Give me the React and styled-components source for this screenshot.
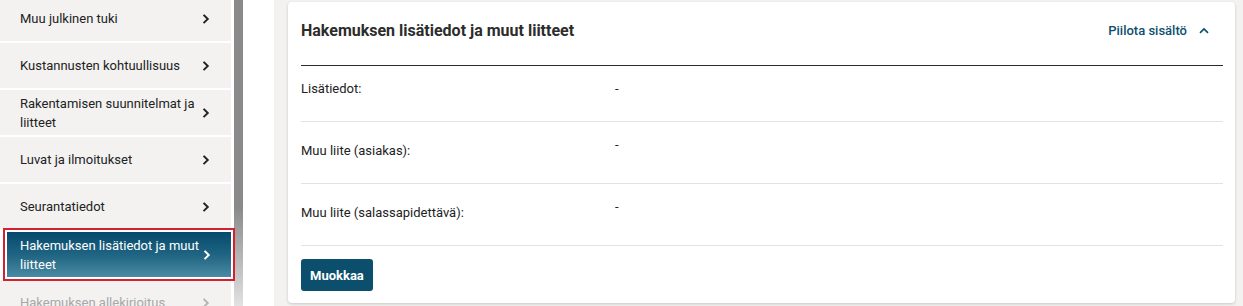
import React from "react";
import styled, { createGlobalStyle, css } from "styled-components";

const Global = createGlobalStyle`
  html, body { margin: 0; padding: 0; background: #fff; }
  body { font-family: Roboto, "Liberation Sans", Arial, sans-serif; color: #222; overflow: hidden; }
  * { box-sizing: border-box; }
`;

const Page = styled.div`
  display: flex;
  height: 306px;
  overflow: hidden;
`;

const Sidebar = styled.div`
  display: flex;
  width: 243px;
  flex: none;
`;

const NavList = styled.nav`
  width: 234px;
  display: flex;
  flex-direction: column;
  gap: 2px;
  margin-top: -4px;
  padding-right: 3px;
`;

const NavItem = styled.div`
  display: flex;
  align-items: center;
  justify-content: space-between;
  min-height: 45px;
  padding: 3px 20px 3px 20px;
  background: #f3f2f1;
  font-size: 13px;
  line-height: 19px;
  color: #222;
  ${(p) =>
    p.$active &&
    css`
      position: relative;
      z-index: 1;
      margin: 1px 0 0 7px;
      padding-left: 13px;
      padding-right: 19px;
      color: #fff;
      background: linear-gradient(180deg, #054a6b 0%, #1f6482 50%, #4a8aa3 100%);
      outline: 2px solid #d3212f;
      outline-offset: 2px;
      min-height: 45px;
    `}
  ${(p) =>
    p.$disabled &&
    css`
      margin-top: 1px;
      color: #a8a8a8;
    `}
`;

const NavText = styled.span`
  max-width: 180px;
`;

const Chevron = styled.svg`
  width: 10px;
  height: 10px;
  flex: none;
`;

const ScrollTrack = styled.div`
  width: 9px;
  background: linear-gradient(180deg, #8a8a8a 0%, #8a8a8a 68%, #b9b9b9 85%, #e2e2e2 100%);
`;

const Gutter = styled.div`
  width: 31px;
  flex: none;
  background: #fff;
`;

const Main = styled.main`
  flex: 1;
  background: #f3f2f1;
  padding: 2px 8px 3px 14px;
`;

const Card = styled.section`
  background: #fff;
  border-radius: 4px;
  box-shadow: 0 1px 3px rgba(0, 0, 0, 0.18);
  padding: 0 12px 12px 13px;
  height: 301px;
`;

const CardHeader = styled.header`
  display: flex;
  align-items: center;
  justify-content: space-between;
  height: 64px;
  border-bottom: 1.5px solid #2b2b2b;
  padding-bottom: 6px;
`;

const Title = styled.h2`
  margin: 0;
  font-size: 16px;
  font-weight: 700;
  color: #2c2c2c;
`;

const Toggle = styled.button`
  display: flex;
  align-items: center;
  gap: 12px;
  border: 0;
  background: none;
  padding: 0 14px 0 0;
  font-family: inherit;
  font-size: 13px;
  font-weight: 500;
  color: #0d4f6d;
  cursor: pointer;
`;

const Row = styled.div`
  display: grid;
  grid-template-columns: 314px 1fr;
  height: ${(p) => p.$h}px;
  border-bottom: 1px solid #e2e2e2;
  font-size: 13px;
  line-height: 20px;
`;

const Label = styled.div`
  padding-top: ${(p) => p.$top}px;
  color: #222;
`;

const Value = styled.div`
  padding-top: ${(p) => p.$top}px;
  color: #222;
`;

const Actions = styled.div`
  padding-top: 13px;
`;

const Button = styled.button`
  height: 32px;
  padding: 0 9px;
  border: 0;
  border-radius: 3px;
  background: #0b4f6c;
  color: #fff;
  font-family: inherit;
  font-size: 13px;
  font-weight: 700;
`;

const Chev = ({ color, dir = "right" }) => (
  <Chevron viewBox="0 0 10 10" aria-hidden>
    {dir === "right" ? (
      <path d="M3.2 1.5 L6.8 5 L3.2 8.5" fill="none" stroke={color} strokeWidth="1.9" strokeLinecap="square" />
    ) : (
      <path d="M1 6.8 L5 3 L9 6.8" fill="none" stroke={color} strokeWidth="1.7" />
    )}
  </Chevron>
);

const nav = [
  { t: "Muu julkinen tuki" },
  { t: "Kustannusten kohtuullisuus" },
  { t: "Rakentamisen suunnitelmat ja liitteet" },
  { t: "Luvat ja ilmoitukset" },
  { t: "Seurantatiedot" },
  { t: "Hakemuksen lisätiedot ja muut liitteet", active: true },
  { t: "Hakemuksen allekirjoitus", disabled: true },
];

const rows = [
  { l: "Lisätiedot:", h: 56, lt: 13, vt: 13 },
  { l: "Muu liite (asiakas):", h: 62, lt: 19, vt: 13 },
  { l: "Muu liite (salassapidettävä):", h: 62, lt: 19, vt: 13 },
];

export default function App() {
  return (
    <>
      <Global />
      <Page>
        <Sidebar>
          <NavList>
            {nav.map((n) => (
              <NavItem key={n.t} $active={n.active} $disabled={n.disabled}>
                <NavText>{n.t}</NavText>
                <Chev color={n.active ? "#fff" : n.disabled ? "#b5b5b5" : "#222"} />
              </NavItem>
            ))}
          </NavList>
          <ScrollTrack />
        </Sidebar>
        <Gutter />
        <Main>
          <Card>
            <CardHeader>
              <Title>Hakemuksen lisätiedot ja muut liitteet</Title>
              <Toggle>
                Piilota sisältö
                <Chev color="#0d4f6d" dir="up" />
              </Toggle>
            </CardHeader>
            {rows.map((r) => (
              <Row key={r.l} $h={r.h}>
                <Label $top={r.lt}>{r.l}</Label>
                <Value $top={r.vt}>-</Value>
              </Row>
            ))}
            <Actions>
              <Button>Muokkaa</Button>
            </Actions>
          </Card>
        </Main>
      </Page>
    </>
  );
}
